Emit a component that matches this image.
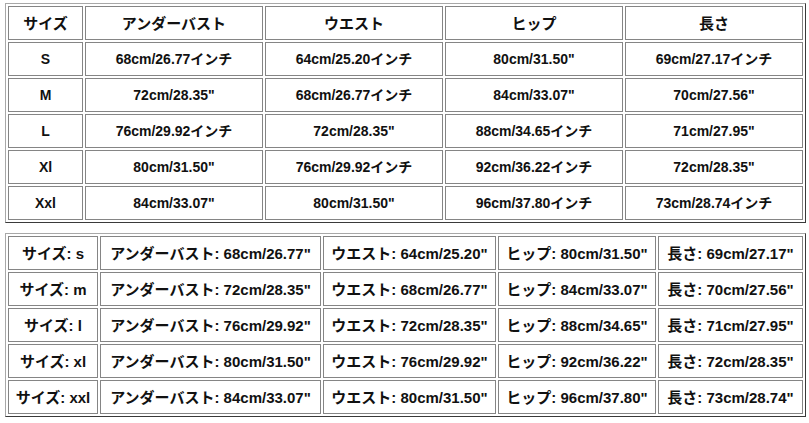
const sizes = [
  { size: "S", small: "s", bust: "68cm/26.77インチ", bust2: "68cm/26.77\"", waist: "64cm/25.20インチ", waist2: "64cm/25.20\"", hip: "80cm/31.50\"", length: "69cm/27.17インチ", length2: "69cm/27.17\"" },
  { size: "M", small: "m", bust: "72cm/28.35\"", bust2: "72cm/28.35\"", waist: "68cm/26.77インチ", waist2: "68cm/26.77\"", hip: "84cm/33.07\"", length: "70cm/27.56\"", length2: "70cm/27.56\"" },
  { size: "L", small: "l", bust: "76cm/29.92インチ", bust2: "76cm/29.92\"", waist: "72cm/28.35\"", waist2: "72cm/28.35\"", hip: "88cm/34.65インチ", hip2: "88cm/34.65\"", length: "71cm/27.95\"", length2: "71cm/27.95\"" },
  { size: "Xl", small: "xl", bust: "80cm/31.50\"", bust2: "80cm/31.50\"", waist: "76cm/29.92インチ", waist2: "76cm/29.92\"", hip: "92cm/36.22インチ", hip2: "92cm/36.22\"", length: "72cm/28.35\"", length2: "72cm/28.35\"" },
  { size: "Xxl", small: "xxl", bust: "84cm/33.07\"", bust2: "84cm/33.07\"", waist: "80cm/31.50\"", waist2: "80cm/31.50\"", hip: "96cm/37.80インチ", hip2: "96cm/37.80\"", length: "73cm/28.74インチ", length2: "73cm/28.74\"" },
]

const cell = "h-[34px] p-0 border border-[#858585] text-center align-middle whitespace-nowrap"
const tableCls =
  "ml-[5px] w-[801px] table-fixed border-separate border-spacing-[2px] border border-t-[#a8a8a8] border-l-[#a8a8a8] border-r-[#3a3a3a] border-b-[#3a3a3a]"

export default function App() {
  return (
    <div
      className="pt-[3px] text-[14px] font-bold leading-none text-[#111]"
      style={{ fontFamily: '"Liberation Sans", Arial, "Noto Sans CJK JP", sans-serif' }}
    >
      <table className={tableCls}>
        <colgroup>
          <col className="w-[75px]" />
          <col className="w-[178px]" />
          <col className="w-[178px]" />
          <col className="w-[178px]" />
          <col className="w-[178px]" />
        </colgroup>
        <tbody>
          <tr className="text-[15px]">
            <td className={cell}>サイズ</td>
            <td className={cell}>アンダーバスト</td>
            <td className={cell}>ウエスト</td>
            <td className={cell}>ヒップ</td>
            <td className={cell}>長さ</td>
          </tr>
          {sizes.map((s) => (
            <tr key={s.size}>
              <td className={cell}>{s.size}</td>
              <td className={cell}>{s.bust}</td>
              <td className={cell}>{s.waist}</td>
              <td className={cell}>{s.hip}</td>
              <td className={cell}>{s.length}</td>
            </tr>
          ))}
        </tbody>
      </table>

      <table className={`${tableCls} mt-[10px] text-[15px]`}>
        <colgroup>
          <col className="w-[90px]" />
          <col className="w-[221px]" />
          <col className="w-[173px]" />
          <col className="w-[158px]" />
          <col className="w-[145px]" />
        </colgroup>
        <tbody>
          {sizes.map((s) => (
            <tr key={s.small}>
              <td className={cell}>サイズ: {s.small}</td>
              <td className={cell}>アンダーバスト: {s.bust2}</td>
              <td className={cell}>ウエスト: {s.waist2}</td>
              <td className={cell}>ヒップ: {s.hip2 ?? s.hip}</td>
              <td className={cell}>長さ: {s.length2}</td>
            </tr>
          ))}
        </tbody>
      </table>
    </div>
  )
}
